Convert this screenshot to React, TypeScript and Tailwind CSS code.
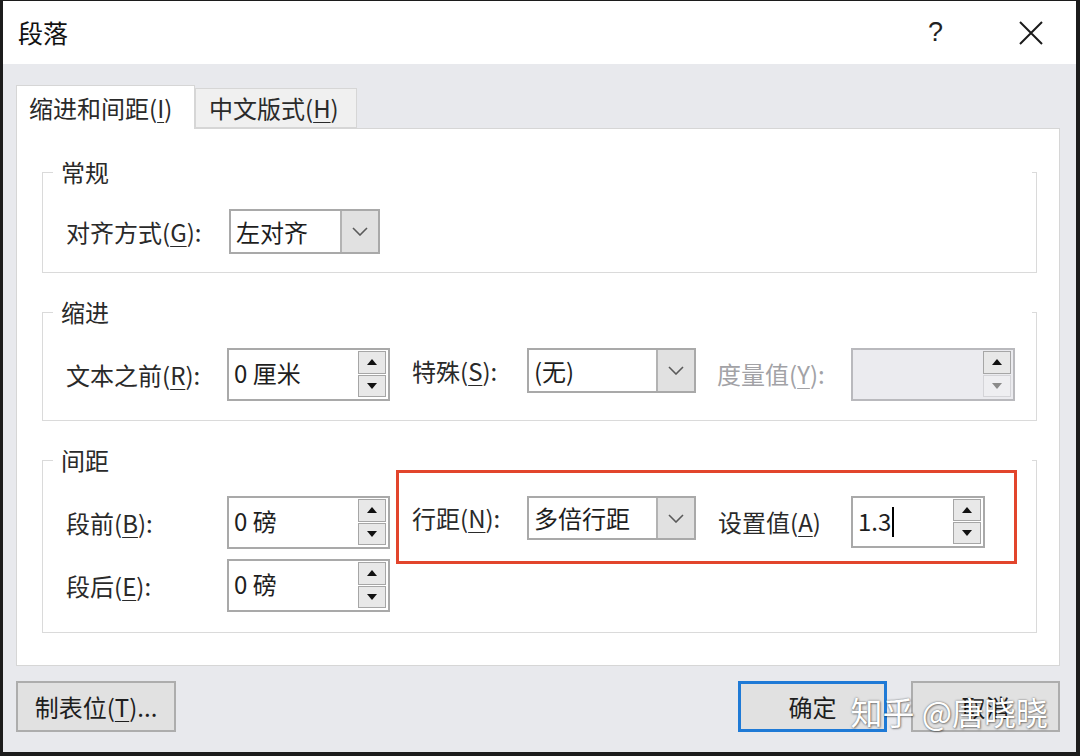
import * as React from "react";

const FONT = "font-['Noto_Sans_CJK_SC','Noto_Sans',sans-serif]";

function U({ children }: { children: React.ReactNode }) {
  return <span className="underline decoration-1 underline-offset-[4px]">{children}</span>;
}

function Label({
  children,
  width,
  height,
  disabled,
}: {
  children: React.ReactNode;
  width: string;
  height: string;
  disabled?: boolean;
}) {
  return (
    <div
      className={`${width} ${height} shrink-0 flex items-center text-[24px] whitespace-nowrap ${
        disabled ? "text-[#a2a2a6]" : "text-[#2a2a2a]"
      }`}
    >
      {children}
    </div>
  );
}

function Tri({ up, dim }: { up?: boolean; dim?: boolean }) {
  return (
    <svg width="10" height="6" viewBox="0 0 10 6">
      <path d={up ? "M0 6 L5 0 L10 6 Z" : "M0 0 L5 6 L10 0 Z"} fill={dim ? "#8a8a8a" : "#111"} />
    </svg>
  );
}

function Spin({
  value,
  width,
  height = "h-[53px]",
  disabled,
  caret,
}: {
  value?: string;
  width: string;
  height?: string;
  disabled?: boolean;
  caret?: boolean;
}) {
  return (
    <div
      className={`${width} ${height} shrink-0 flex border-2 ${
        disabled ? "bg-[#ebebef] border-[#b9b9bd]" : "bg-white border-[#a9a9a9]"
      }`}
    >
      <div className="flex-1 flex items-start pl-[5px] pt-[5px] text-[24px] text-[#1e1e1e]">
        {value}
        {caret && <span className="ml-[1px] mt-[4px] w-[2px] h-[30px] bg-black" />}
      </div>
      <div className="w-[30px] flex flex-col pt-[1px] pr-[2px] pb-[2px] gap-[1px]">
        <div className="flex-1 flex items-center justify-center border border-[#a6a6a6] bg-[#e8e8e8]">
          <Tri up />
        </div>
        <div
          className={`flex-1 flex items-center justify-center border ${
            disabled ? "border-[#d4d4d8] bg-[#eeeef1]" : "border-[#a6a6a6] bg-[#e8e8e8]"
          }`}
        >
          <Tri dim={disabled} />
        </div>
      </div>
    </div>
  );
}

function Select({ value, width, height = "h-[45px]" }: { value: string; width: string; height?: string }) {
  return (
    <div className={`${width} ${height} shrink-0 flex border-2 border-[#a9a9a9] bg-white`}>
      <div className="flex-1 flex items-center pl-[5px] text-[24px] text-[#1e1e1e]">{value}</div>
      <div className="w-[38px] flex items-center justify-center bg-[#e1e1e1] border-l-2 border-[#b3b3b3]">
        <svg width="16" height="9" viewBox="0 0 16 9">
          <path d="M1 1 L8 8 L15 1" fill="none" stroke="#5a5a5a" strokeWidth="1.6" />
        </svg>
      </div>
    </div>
  );
}

function Group({
  title,
  height,
  className = "",
  children,
}: {
  title: string;
  height: string;
  className?: string;
  children: React.ReactNode;
}) {
  return (
    <div className={`relative ${height} border-x border-b border-[#dadada] ${className}`}>
      <div className="-mt-[15px] h-[30px] flex items-center">
        <span className="w-[10px] h-px bg-[#dadada]" />
        <span className="px-[8px] text-[24px] text-[#2a2a2a] leading-none">{title}</span>
        <span className="flex-1" />
        <span className="w-[4px] h-px bg-[#dadada]" />
      </div>
      {children}
    </div>
  );
}

export default function App() {
  return (
    <div
      className={`${FONT} w-[1080px] h-[756px] flex flex-col bg-[#e8e9ed] border-l-[3px] border-t border-r-4 border-b-4 border-[#1c1c1c] overflow-hidden`}
    >
      {/* title bar */}
      <div className="h-[63px] shrink-0 bg-white flex items-center pl-[15px]">
        <span className="text-[25px] text-[#111]">段落</span>
        <span className="flex-1" />
        <span className="font-['Liberation_Sans',sans-serif] text-[27px] text-[#222] mr-[76px]">?</span>
        <svg width="24" height="24" viewBox="0 0 24 24" className="mr-[33px]">
          <path d="M1 1 L23 23 M23 1 L1 23" stroke="#1a1a1a" strokeWidth="2" />
        </svg>
      </div>

      <div className="flex-1 flex flex-col pl-[13px] pr-[16px]">
        {/* tabs */}
        <div className="mt-[20px] h-[44px] flex items-end">
          <div className="w-[179px] h-[44px] -mb-px relative z-10 bg-white border-t border-x border-[#d6d6d6] flex items-center pl-[12px] text-[24px] text-[#2a2a2a] whitespace-nowrap">
            缩进和间距(<U>I</U>)
          </div>
          <div className="w-[162px] h-[40px] bg-[#f0f0f0] border border-[#d6d6d6] flex items-center pl-[13px] text-[24px] text-[#2a2a2a] whitespace-nowrap">
            中文版式(<U>H</U>)
          </div>
        </div>

        {/* panel */}
        <div className="h-[538px] bg-white border border-[#d6d6d6] flex flex-col pl-[25px] pr-[22px] pt-[43px]">
          <Group title="常规" height="h-[101px]">
            <div className="mt-[22px] pl-[23px] flex items-start">
              <Label width="w-[163px]" height="h-[45px]">
                对齐方式(<U>G</U>):
              </Label>
              <Select value="左对齐" width="w-[151px]" />
            </div>
          </Group>

          <Group title="缩进" height="h-[109px]" className="mt-[39px]">
            <div className="mt-[21px] pl-[23px] flex items-start">
              <Label width="w-[161px]" height="h-[53px]">
                文本之前(<U>R</U>):
              </Label>
              <Spin value="0 厘米" width="w-[163px]" />
              <div className="w-[22px]" />
              <Label width="w-[115px]" height="h-[46px]">
                特殊(<U>S</U>):
              </Label>
              <Select value="(无)" width="w-[169px]" />
              <div className="w-[21px]" />
              <Label width="w-[134px]" height="h-[52px]" disabled>
                度量值(<U>Y</U>):
              </Label>
              <Spin width="w-[164px]" disabled />
            </div>
          </Group>

          <Group title="间距" height="h-[173px]" className="mt-[39px]">
            <div className="mt-[21px] pl-[23px] flex items-start">
              <Label width="w-[161px]" height="h-[53px]">
                段前(<U>B</U>):
              </Label>
              <Spin value="0 磅" width="w-[163px]" />
              <div className="w-[22px]" />
              <Label width="w-[115px]" height="h-[44px]">
                行距(<U>N</U>):
              </Label>
              <Select value="多倍行距" width="w-[169px]" height="h-[44px]" />
              <div className="w-[22px]" />
              <Label width="w-[133px]" height="h-[52px]">
                设置值(<U>A</U>)
              </Label>
              <Spin value="1.3" width="w-[134px]" height="h-[52px]" caret />
            </div>
            <div className="mt-[10px] pl-[23px] flex items-start">
              <Label width="w-[161px]" height="h-[53px]">
                段后(<U>E</U>):
              </Label>
              <Spin value="0 磅" width="w-[163px]" />
            </div>
            {/* red annotation box */}
            <div className="absolute left-[353px] top-[10px] w-[621px] h-[94px] border-[3px] border-[#e2452c]" />
          </Group>
        </div>

        {/* buttons */}
        <div className="relative mt-[15px] flex items-start">
          <div className="w-[160px] h-[51px] bg-[#e1e1e1] border-2 border-[#adadad] flex items-center justify-center text-[24px] text-[#1e1e1e] whitespace-nowrap">
            制表位(<U>T</U>)...
          </div>
          <span className="flex-1" />
          <div className="w-[149px] h-[51px] bg-[#e1e1e1] border-[3px] border-[#1f7ad6] flex items-center justify-center text-[24px] text-[#1e1e1e]">
            确定
          </div>
          <div className="w-[24px]" />
          <div className="w-[149px] h-[51px] bg-[#e1e1e1] border-2 border-[#adadad] flex items-center justify-center text-[24px] text-[#1e1e1e]">
            取消
          </div>
          {/* watermark */}
          <div className="absolute right-[12px] top-[6px] text-[32px] text-white whitespace-nowrap [text-shadow:0_0_2px_rgba(0,0,0,0.55),1px_1px_2px_rgba(0,0,0,0.35)]">
            知乎 @唐晓晓
          </div>
        </div>
      </div>
    </div>
  );
}
